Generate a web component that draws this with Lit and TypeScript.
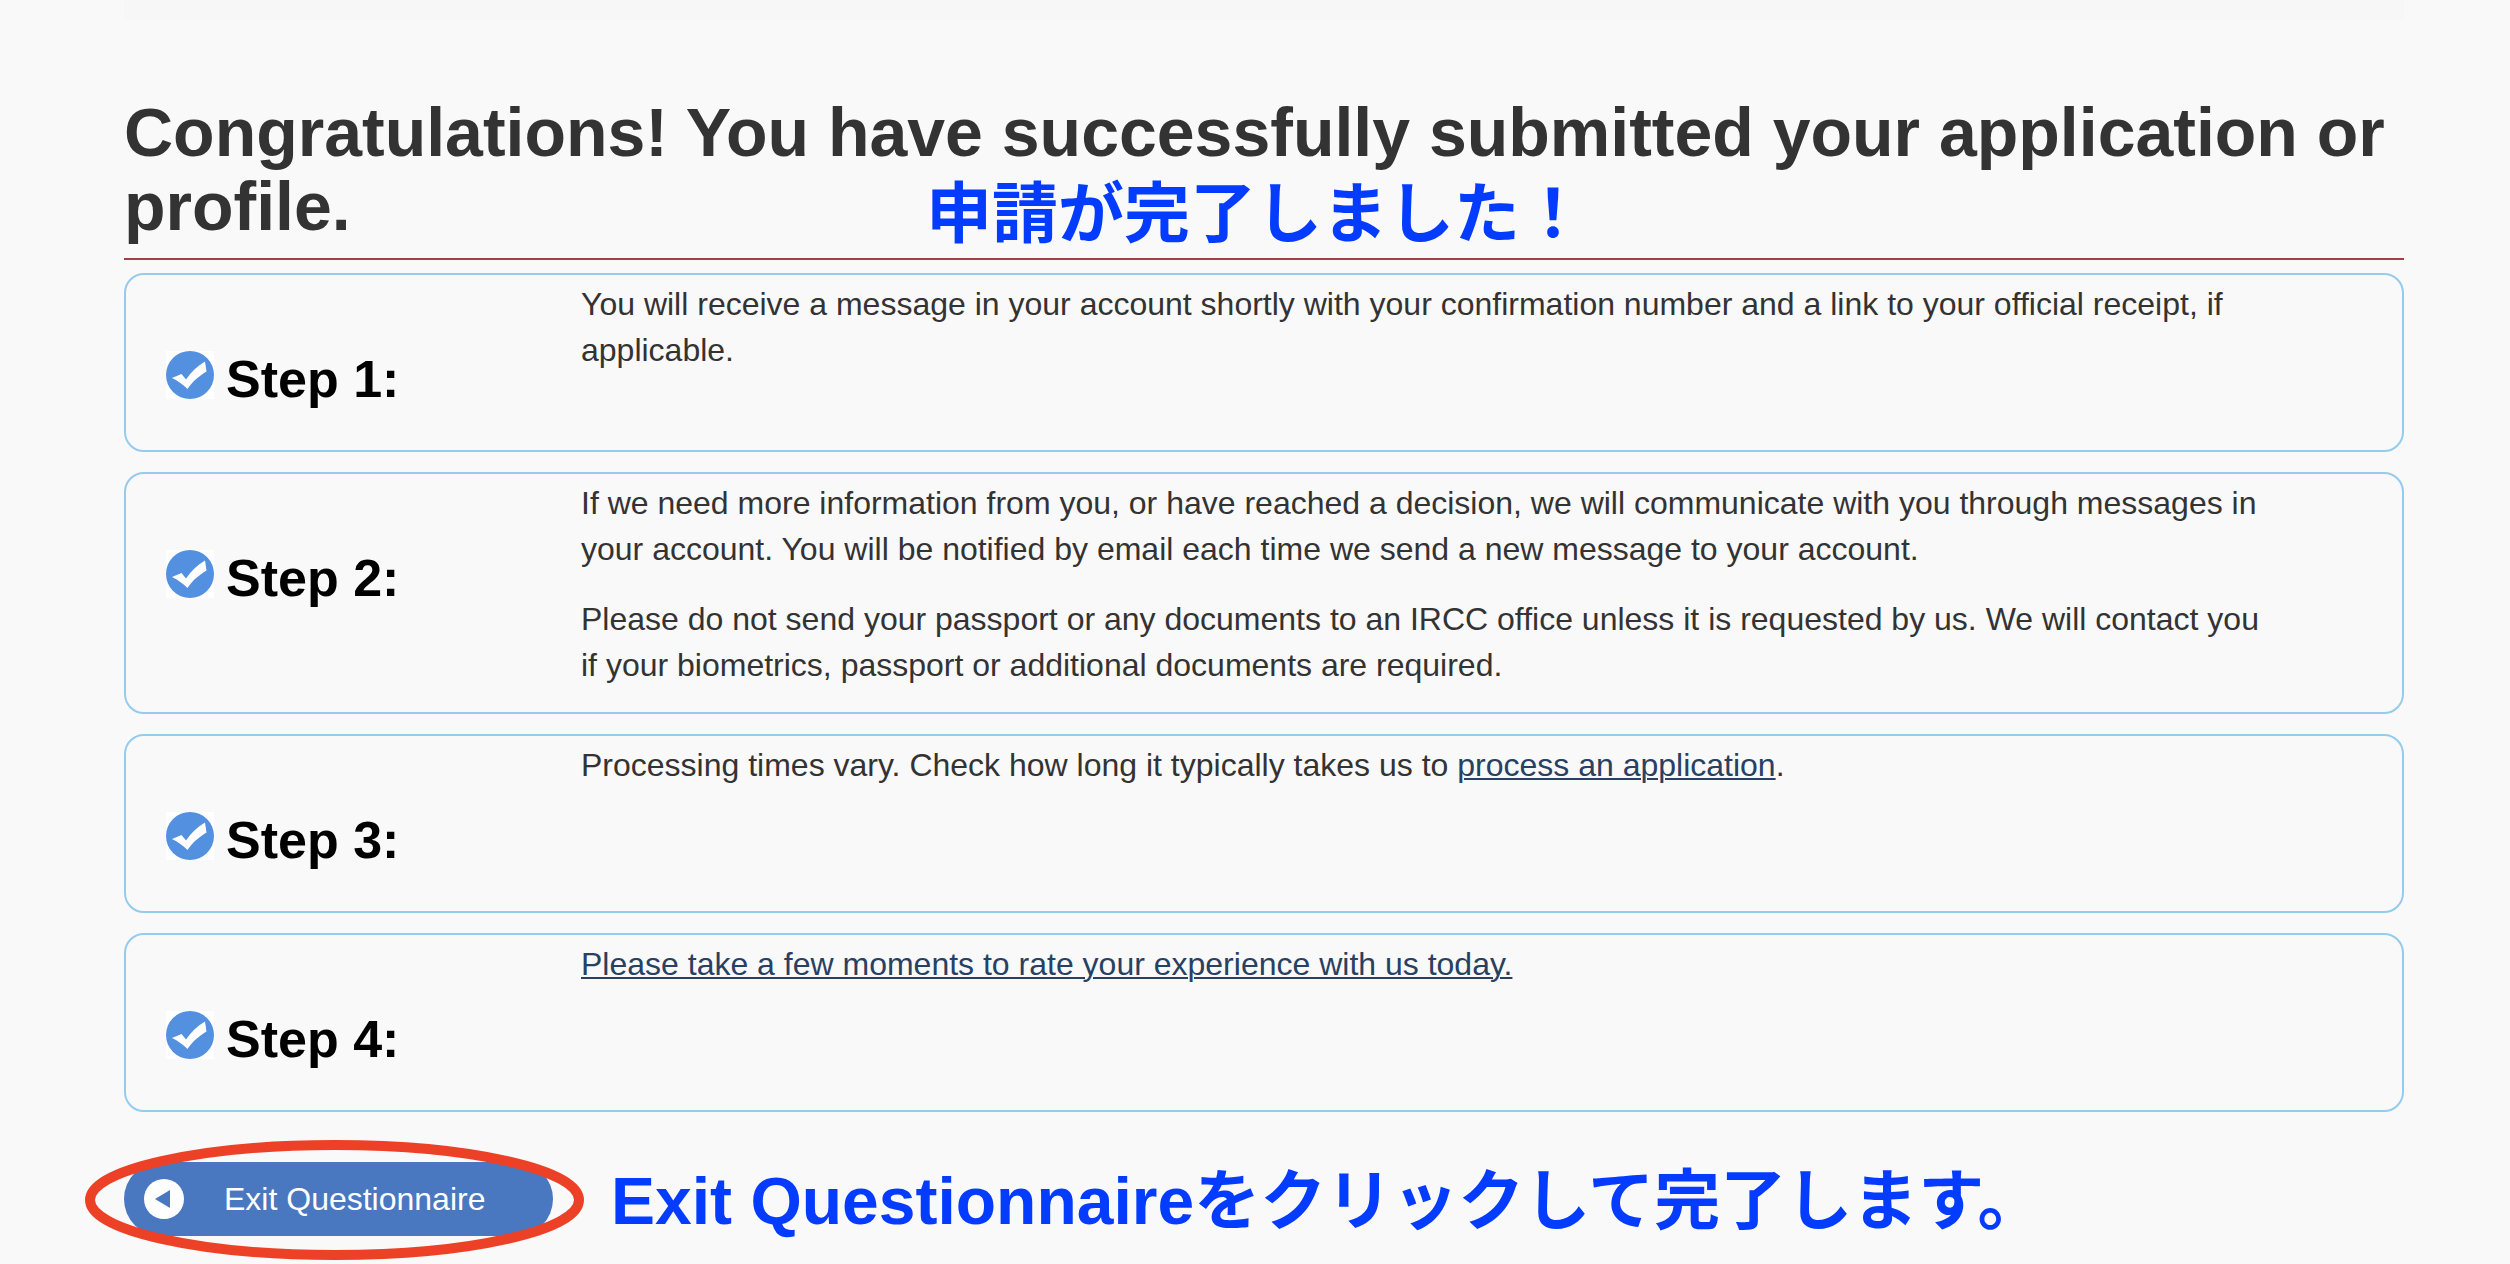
import { LitElement, html, css, svg } from "lit";
import type { TemplateResult } from "lit";
import { customElement, property } from "lit/decorators.js";

@customElement("step-card")
export class StepCard extends LitElement {
  @property({ type: Number }) number = 1;

  static styles = css`
    :host {
      display: block;
    }
    .card {
      display: grid;
      grid-template-columns: 455px minmax(0, 1fr);
      box-sizing: border-box;
      min-height: 179px;
      padding: 6px 124px 0 0;
      border: 2px solid #95cbed;
      border-radius: 20px;
    }
    .label {
      display: flex;
      align-items: flex-start;
      gap: 12px;
      padding: 70px 0 0 40px;
    }
    .icon {
      flex: none;
      width: 48px;
      height: 48px;
      background: #fff;
    }
    .title {
      margin: 0;
      color: #000;
      font-size: 52px;
      line-height: 56px;
      font-weight: 700;
      white-space: nowrap;
    }
  `;

  render() {
    return html`
      <section class="card">
        <div class="label">
          <svg class="icon" viewBox="0 0 48 48" aria-hidden="true">
            <circle cx="24" cy="24" r="24" fill="#5391e0" />
            <path
              d="M6 27 L15.500 23 L20 28.500 C25 21 31 15 39 10.500 L40.500 20.500 C33 25 26 31 21.500 38 C17 33.500 12 30 6 27 Z"
              fill="#fff"
            />
          </svg>
          <h2 class="title">Step ${this.number}:</h2>
        </div>
        <slot></slot>
      </section>
    `;
  }
}

const steps: TemplateResult[] = [
  html`<p class="text">
    You will receive a message in your account shortly with your confirmation
    number and a link to your official receipt, if applicable.
  </p>`,
  html`<p class="text">
      If we need more information from you, or have reached a decision, we will
      communicate with you through messages in your account. You will be
      notified by email each time we send a new message to your account.
    </p>
    <p class="text">
      Please do not send your passport or any documents to an IRCC office unless
      it is requested by us. We will contact you if your biometrics, passport or
      additional documents are required.
    </p>`,
  html`<p class="text">
    Processing times vary. Check how long it typically takes us to
    <a class="link" href="#processing">process an application</a>.
  </p>`,
  html`<p class="text">
    <a class="link" href="#survey"
      >Please take a few moments to rate your experience with us today.</a
    >
  </p>`,
];

@customElement("app-root")
export class AppRoot extends LitElement {
  static styles = css`
    :host {
      display: block;
      min-height: 100vh;
      box-sizing: border-box;
      padding: 0 106px 0 124px;
      background: #f9f9f9;
      color: #333;
      font-family: "Liberation Sans", "Noto Sans CJK JP", sans-serif;
    }
    .band {
      height: 20px;
      background: #f7f7f7;
    }
    .header {
      position: relative;
      margin-top: 75px;
      padding-bottom: 15px;
      border-bottom: 2px solid #a04145;
    }
    .heading {
      margin: 0;
      font-size: 68px;
      line-height: 74px;
      font-weight: 700;
    }
    .note {
      margin: 0;
      color: #043cff;
      font-size: 66px;
      line-height: 74px;
      font-weight: 700;
      white-space: nowrap;
    }
    .overlay {
      position: absolute;
      left: 802px;
      bottom: 7px;
    }
    .steps {
      display: flex;
      flex-direction: column;
      gap: 20px;
      margin-top: 13px;
    }
    .text {
      margin: 0 0 24px;
      font-size: 32px;
      line-height: 46px;
    }
    .link {
      color: #284162;
      text-decoration-thickness: 2px;
      text-underline-offset: 2px;
    }
    .footer {
      display: flex;
      align-items: center;
      gap: 58px;
      margin-top: 48px;
    }
    .exit-wrap {
      position: relative;
      flex: none;
    }
    .exit {
      display: flex;
      align-items: center;
      gap: 40px;
      width: 429px;
      height: 74px;
      padding: 0 20px;
      border: 0;
      border-radius: 37px;
      background: #4977c0;
      color: #fff;
      font-family: inherit;
      font-size: 32px;
      line-height: 46px;
    }
    .back {
      flex: none;
      width: 40px;
      height: 40px;
    }
    .ring {
      position: absolute;
      left: -39px;
      top: -22px;
      width: 499px;
      height: 120px;
      pointer-events: none;
    }
    .caption {
      padding-top: 4px;
    }
  `;

  render() {
    return html`
      <div class="band"></div>
      <header class="header">
        <h1 class="heading">
          Congratulations! You have successfully submitted your application or
          profile.
        </h1>
        <p class="note overlay" lang="ja">申請が完了しました！</p>
      </header>
      <main class="steps">
        ${steps.map(
          (body, i) =>
            html`<step-card .number=${i + 1}><div>${body}</div></step-card>`
        )}
      </main>
      <footer class="footer">
        <div class="exit-wrap">
          <button class="exit" type="button">
            <svg class="back" viewBox="0 0 40 40" aria-hidden="true">
              <circle cx="20" cy="20" r="20" fill="#fff" />
              <path d="M11 20 L26 11 V29 Z" fill="#4977c0" />
            </svg>
            Exit Questionnaire
          </button>
          <svg class="ring" viewBox="0 0 499 120" aria-hidden="true">
            ${svg`<ellipse cx="249.500" cy="60" rx="244.500" ry="55" fill="none" stroke="#ec4126" stroke-width="10" />`}
          </svg>
        </div>
        <p class="note caption" lang="ja">Exit Questionnaireをクリックして完了します。</p>
      </footer>
    `;
  }
}
